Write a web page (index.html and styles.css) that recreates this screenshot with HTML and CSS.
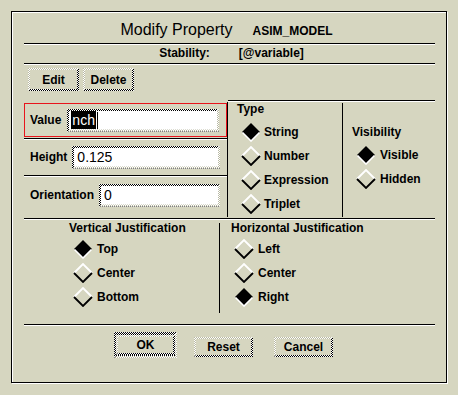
FILE: index.html
```html
<!DOCTYPE html>
<html>
<head>
<meta charset="utf-8">
<link rel="stylesheet" href="styles.css">
</head>
<body>
<div class="frame">
  <div class="title-row"><span class="title">Modify Property</span><span class="obj">ASIM_MODEL</span></div>
  <div class="sep"></div>
  <div class="sub-row"><span>Stability:</span><span>[@variable]</span></div>
  <div class="sep"></div>
  <div class="tool-row">
    <div class="btn raised tool-btn"><span class="face">Edit</span></div>
    <div class="btn raised tool-btn"><span class="face">Delete</span></div>
  </div>
  <div class="main">
    <div class="fields">
      <div class="field-row focus">
        <span class="lbl">Value</span>
        <span class="input sunken"><span class="inner"><span class="sel">nch</span><span class="caret"></span></span></span>
      </div>
      <div class="hsep"></div>
      <div class="field-row h-row">
        <span class="lbl">Height</span>
        <span class="input sunken"><span class="inner">0.125</span></span>
      </div>
      <div class="hsep"></div>
      <div class="field-row o-row">
        <span class="lbl">Orientation</span>
        <span class="input sunken"><span class="inner">0</span></span>
      </div>
    </div>
    <div class="vsep vsep-a"></div>
    <div class="right">
      <div class="type-col">
        <div class="grp-lbl">Type</div>
        <div class="radios type-radios">
          <div class="radio"><svg width="20" height="20" viewBox="0 0 20 20"><path d="M1 10 L10 1 L19 10 L10 19 Z" fill="#000"/><path d="M1.5 10.5 L10 19 L18.5 10.5" stroke="#fff" stroke-width="1.6" fill="none"/></svg><span>String</span></div>
          <div class="radio"><svg width="20" height="20" viewBox="0 0 20 20"><path d="M1 10 L10 1 L19 10" stroke="#fff" stroke-width="1.8" fill="none"/><path d="M1 10 L10 19 L19 10" stroke="#000" stroke-width="1.8" fill="none"/></svg><span>Number</span></div>
          <div class="radio"><svg width="20" height="20" viewBox="0 0 20 20"><path d="M1 10 L10 1 L19 10" stroke="#fff" stroke-width="1.8" fill="none"/><path d="M1 10 L10 19 L19 10" stroke="#000" stroke-width="1.8" fill="none"/></svg><span>Expression</span></div>
          <div class="radio"><svg width="20" height="20" viewBox="0 0 20 20"><path d="M1 10 L10 1 L19 10" stroke="#fff" stroke-width="1.8" fill="none"/><path d="M1 10 L10 19 L19 10" stroke="#000" stroke-width="1.8" fill="none"/></svg><span>Triplet</span></div>
        </div>
      </div>
      <div class="vsep vsep-b"></div>
      <div class="vis-col">
        <div class="grp-lbl">Visibility</div>
        <div class="radios vis-radios">
          <div class="radio"><svg width="20" height="20" viewBox="0 0 20 20"><path d="M1 10 L10 1 L19 10 L10 19 Z" fill="#000"/><path d="M1.5 10.5 L10 19 L18.5 10.5" stroke="#fff" stroke-width="1.6" fill="none"/></svg><span>Visible</span></div>
          <div class="radio"><svg width="20" height="20" viewBox="0 0 20 20"><path d="M1 10 L10 1 L19 10" stroke="#fff" stroke-width="1.8" fill="none"/><path d="M1 10 L10 19 L19 10" stroke="#000" stroke-width="1.8" fill="none"/></svg><span>Hidden</span></div>
        </div>
      </div>
    </div>
  </div>
  <div class="sep"></div>
  <div class="just">
    <div class="just-col vj">
      <div class="grp-lbl">Vertical Justification</div>
      <div class="radios">
        <div class="radio"><svg width="20" height="20" viewBox="0 0 20 20"><path d="M1 10 L10 1 L19 10 L10 19 Z" fill="#000"/><path d="M1.5 10.5 L10 19 L18.5 10.5" stroke="#fff" stroke-width="1.6" fill="none"/></svg><span>Top</span></div>
        <div class="radio"><svg width="20" height="20" viewBox="0 0 20 20"><path d="M1 10 L10 1 L19 10" stroke="#fff" stroke-width="1.8" fill="none"/><path d="M1 10 L10 19 L19 10" stroke="#000" stroke-width="1.8" fill="none"/></svg><span>Center</span></div>
        <div class="radio"><svg width="20" height="20" viewBox="0 0 20 20"><path d="M1 10 L10 1 L19 10" stroke="#fff" stroke-width="1.8" fill="none"/><path d="M1 10 L10 19 L19 10" stroke="#000" stroke-width="1.8" fill="none"/></svg><span>Bottom</span></div>
      </div>
    </div>
    <div class="vsep vsep-c"></div>
    <div class="just-col hj">
      <div class="grp-lbl">Horizontal Justification</div>
      <div class="radios">
        <div class="radio"><svg width="20" height="20" viewBox="0 0 20 20"><path d="M1 10 L10 1 L19 10" stroke="#fff" stroke-width="1.8" fill="none"/><path d="M1 10 L10 19 L19 10" stroke="#000" stroke-width="1.8" fill="none"/></svg><span>Left</span></div>
        <div class="radio"><svg width="20" height="20" viewBox="0 0 20 20"><path d="M1 10 L10 1 L19 10" stroke="#fff" stroke-width="1.8" fill="none"/><path d="M1 10 L10 19 L19 10" stroke="#000" stroke-width="1.8" fill="none"/></svg><span>Center</span></div>
        <div class="radio"><svg width="20" height="20" viewBox="0 0 20 20"><path d="M1 10 L10 1 L19 10 L10 19 Z" fill="#000"/><path d="M1.5 10.5 L10 19 L18.5 10.5" stroke="#fff" stroke-width="1.6" fill="none"/></svg><span>Right</span></div>
      </div>
    </div>
  </div>
  <div class="sep"></div>
  <div class="actions">
    <div class="default-ring sunken"><div class="btn raised act-btn"><span class="face">OK</span></div></div>
    <div class="btn raised act-btn"><span class="face">Reset</span></div>
    <div class="btn raised act-btn"><span class="face">Cancel</span></div>
  </div>
</div>
</body>
</html>
```

FILE: styles.css
```css
* { box-sizing: border-box; }

html, body {
  margin: 0;
  padding: 0;
}

body {
  background: #d6d6c0;
  width: 458px;
  height: 395px;
  overflow: hidden;
  font-family: "Liberation Sans", Arial, sans-serif;
  font-size: 12px;
  font-weight: bold;
  line-height: 14px;
  color: #000;
}

.frame {
  margin: 11px 0 0 11px;
  width: 436px;
  height: 372px;
  border: 1px solid #000;
  box-shadow: inset 1px 1px #fff, 1px 1px #fff;
  display: flex;
  flex-direction: column;
}

/* header */
.title-row {
  height: 31px;
  padding: 9px 5px 0 0;
  display: flex;
  justify-content: center;
  align-items: baseline;
  gap: 20px;
}
.title {
  font-size: 16px;
  font-weight: normal;
  line-height: 18px;
}
.obj {
  font-size: 12px;
}

.sep {
  margin: 0 11px 0 12px;
  height: 2px;
  border-top: 1px solid #000;
  border-bottom: 1px solid #fff;
  flex: none;
}

.sub-row {
  height: 18px;
  padding: 1px 0 0 5px;
  display: flex;
  justify-content: center;
  gap: 29px;
}

.tool-row {
  height: 35px;
  padding: 3px 0 0 16px;
  display: flex;
  gap: 4px;
}

/* 3D stippled borders */
.raised, .sunken {
  position: relative;
  padding: 2px;
}
.raised {
  background: repeating-conic-gradient(#fff 0 25%, #b9b9a3 0 50%) 0 0 / 2px 2px;
}
.raised::before {
  content: "";
  position: absolute;
  inset: 0;
  background: repeating-conic-gradient(#000 0 25%, #fff 0 50%) 0 0 / 2px 2px;
  clip-path: polygon(100% 0, 100% 100%, 0 100%, 2px calc(100% - 2px), calc(100% - 2px) calc(100% - 2px), calc(100% - 2px) 2px);
}
.sunken {
  background: repeating-conic-gradient(#000 0 25%, #fff 0 50%) 0 0 / 2px 2px;
}
.sunken::before {
  content: "";
  position: absolute;
  inset: 0;
  background: repeating-conic-gradient(#fff 0 25%, #b9b9a3 0 50%) 0 0 / 2px 2px;
  clip-path: polygon(100% 0, 100% 100%, 0 100%, 2px calc(100% - 2px), calc(100% - 2px) calc(100% - 2px), calc(100% - 2px) 2px);
}

.btn .face {
  display: flex;
  align-items: center;
  justify-content: center;
  height: 100%;
  background: #d6d6c0;
}
.tool-btn {
  width: 51px;
  height: 23px;
}

/* main area */
.main {
  margin: 0 11px 0 12px;
  height: 118px;
  display: flex;
  flex: none;
}
.fields {
  width: 203px;
  padding-top: 3px;
}
.field-row {
  display: flex;
  align-items: center;
}
.focus {
  border: 1px solid #e8141c;
  height: 34px;
  padding: 0 7px 0 5px;
}
.h-row {
  height: 34px;
  padding: 0 7px 0 6px;
}
.o-row {
  height: 42px;
  padding: 0 7px 6px 6px;
}
.lbl {
  margin-right: 6px;
}
.h-row .lbl, .o-row .lbl {
  margin-right: 5px;
}
.input {
  flex: 1;
  height: 23px;
}
.input .inner {
  display: flex;
  align-items: center;
  height: 100%;
  background: #fff;
  padding-left: 3px;
  font-size: 14px;
  font-weight: normal;
  line-height: 17px;
}
.focus .input .inner {
  padding-left: 2px;
}
.sel {
  background: #000;
  color: #fff;
  padding: 1px 1px 0 1px;
}
.caret {
  width: 1px;
  height: 17px;
  margin-left: 1px;
  background: #000;
}
.hsep {
  height: 2px;
  margin-top: 1px;
  border-top: 1px solid #000;
  border-bottom: 1px solid #fff;
}

.vsep {
  width: 1px;
  background: #000;
  flex: none;
}
.vsep-a {
  margin: 2px 0 1px;
}
.right {
  flex: 1;
  display: flex;
  border-top: 1px solid #000;
  box-shadow: inset 0 1px #fff;
}
.type-col {
  width: 114px;
  padding: 1px 0 0 9px;
}
.vsep-b {
  margin: 2px 0 1px;
}
.vis-col {
  flex: 1;
  padding: 24px 0 0 9px;
}
.grp-lbl {
  height: 14px;
  white-space: nowrap;
}
.radios {
  margin-top: 4px;
  padding-left: 4px;
}
.radio {
  height: 24px;
  display: flex;
  align-items: center;
  gap: 3px;
}
.radio svg {
  flex: none;
}
.vis-radios {
  margin-top: 4px;
}
.vis-radios .radio {
  gap: 4px;
}

/* justification */
.just {
  margin: 0 11px 0 12px;
  height: 104px;
  display: flex;
  flex: none;
}
.just-col {
  padding-top: 1px;
}
.just-col .radios {
  margin-top: 2px;
}
.just-col .radio {
  gap: 4px;
}
.vj {
  width: 195px;
  padding-left: 45px;
}
.vj .radios {
  padding-left: 4px;
}
.hj {
  flex: 1;
  padding-left: 11px;
}
.hj .radios {
  padding-left: 3px;
}
.vsep-c {
  margin: 3px 0 11px;
}

/* actions */
.actions {
  flex: 1;
  padding: 11px 0 0 106px;
  display: flex;
  align-items: flex-start;
  gap: 21px;
}
.act-btn {
  width: 59px;
  height: 20px;
}
.default-ring {
  margin: -5px -4px;
  padding: 3px 2px;
}
.default-ring .act-btn {
  position: relative;
  z-index: 1;
}
```
